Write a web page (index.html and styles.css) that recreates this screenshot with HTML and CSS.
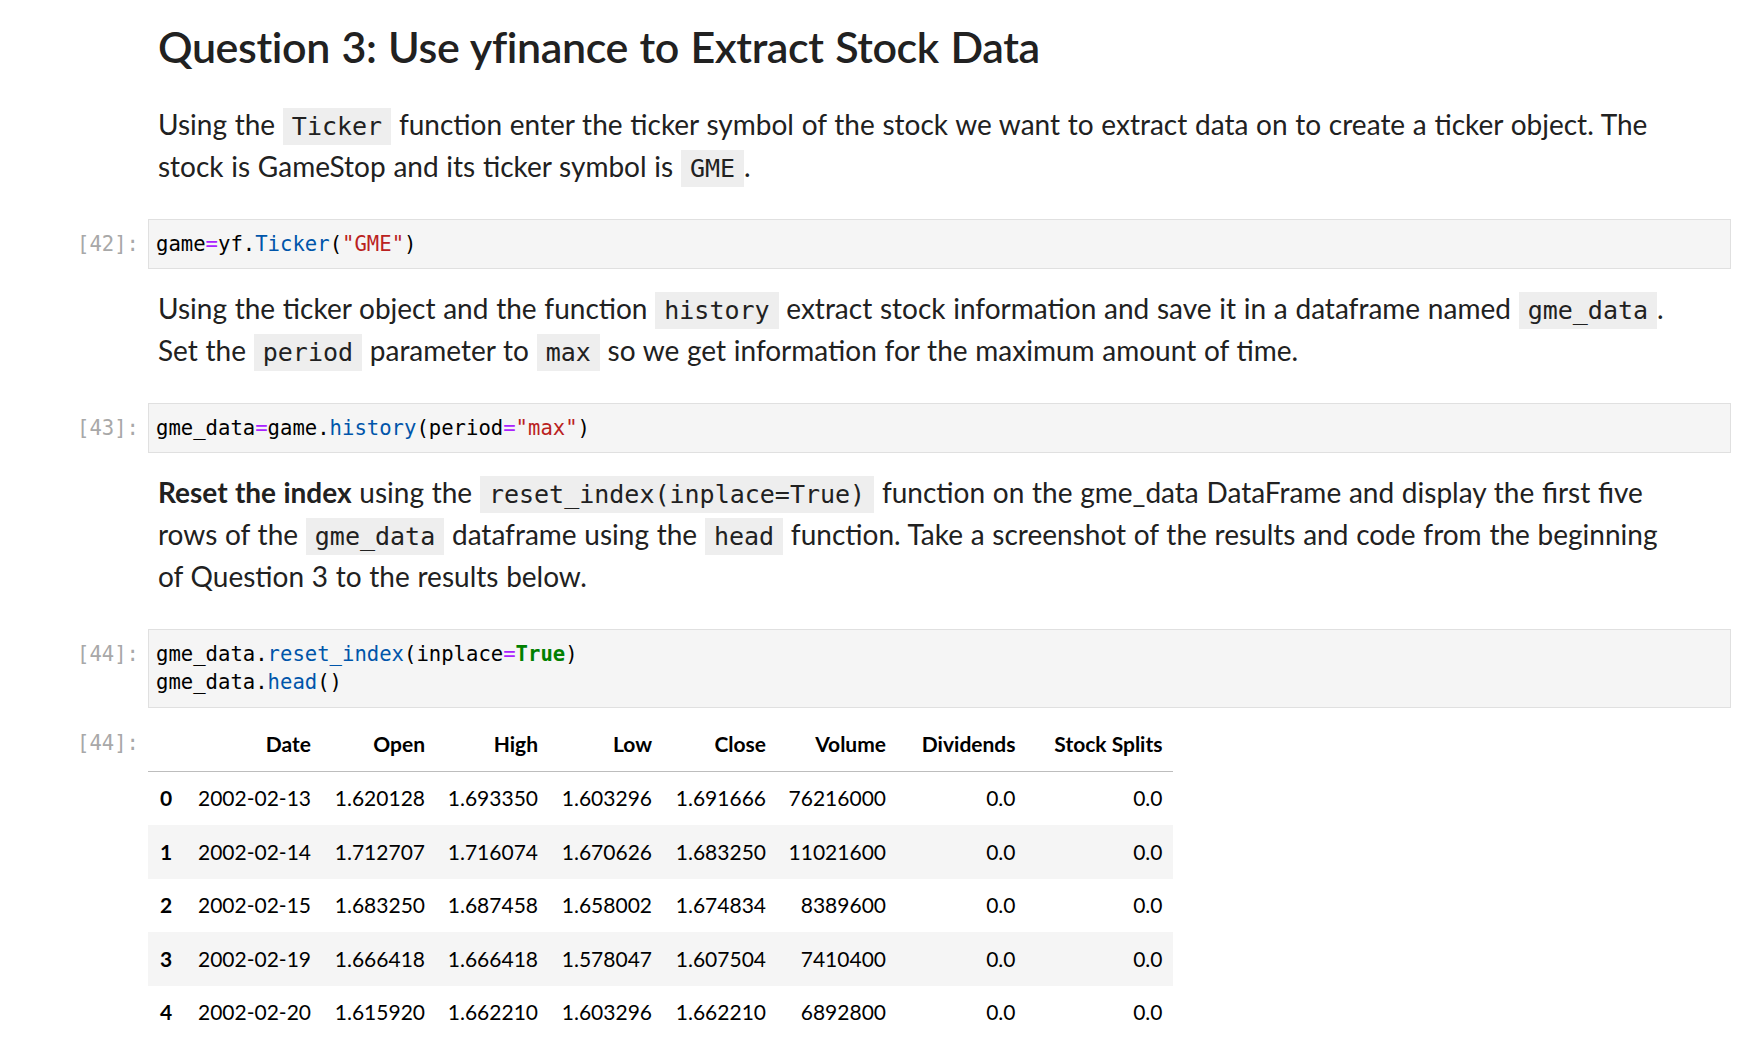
FILE: index.html
```html
<!DOCTYPE html>
<html lang="en">
<head>
<meta charset="utf-8">
<title>Question 3</title>
<link rel="stylesheet" href="styles.css">
</head>
<body>
<div class="notebook">

  <div class="cell md first">
    <div class="prompt"></div>
    <div class="md-body">
      <h2>Question 3: Use yfinance to Extract Stock Data</h2>
      <p>Using the <code>Ticker</code> function enter the ticker symbol of the stock we want to extract data on to create a ticker object. The stock is GameStop and its ticker symbol is <code>GME</code>.</p>
    </div>
  </div>

  <div class="cell code">
    <div class="prompt">[42]:</div>
    <div class="editor"><pre><span class="v">game</span><span class="op">=</span>yf.<span class="fn">Ticker</span>(<span class="str">"GME"</span>)</pre></div>
  </div>

  <div class="cell md">
    <div class="prompt"></div>
    <div class="md-body">
      <p>Using the ticker object and the function <code>history</code> extract stock information and save it in a dataframe named <code>gme_data</code>. Set the <code>period</code> parameter to <code>max</code> so we get information for the maximum amount of time.</p>
    </div>
  </div>

  <div class="cell code">
    <div class="prompt">[43]:</div>
    <div class="editor"><pre>gme_data<span class="op">=</span>game.<span class="fn">history</span>(period<span class="op">=</span><span class="str">"max"</span>)</pre></div>
  </div>

  <div class="cell md">
    <div class="prompt"></div>
    <div class="md-body">
      <p><strong>Reset the index</strong> using the <code>reset_index(inplace=True)</code> function on the gme_data DataFrame and display the first five rows of the <code>gme_data</code> dataframe using the <code>head</code> function. Take a screenshot of the results and code from the beginning of Question 3 to the results below.</p>
    </div>
  </div>

  <div class="cell code">
    <div class="prompt">[44]:</div>
    <div class="editor"><pre>gme_data.<span class="fn">reset_index</span>(inplace<span class="op">=</span><span class="kw">True</span>)
gme_data.<span class="fn">head</span>()</pre></div>
  </div>

  <div class="cell output">
    <div class="prompt">[44]:</div>
    <div class="out-body">
      <table class="df">
        <colgroup>
          <col class="c-idx">
          <col class="c-date">
          <col class="c-open">
          <col class="c-high">
          <col class="c-low">
          <col class="c-close">
          <col class="c-vol">
          <col class="c-div">
          <col class="c-split">
        </colgroup>
        <thead>
          <tr><th></th><th>Date</th><th>Open</th><th>High</th><th>Low</th><th>Close</th><th>Volume</th><th>Dividends</th><th>Stock Splits</th></tr>
        </thead>
        <tbody>
          <tr><th>0</th><td>2002-02-13</td><td>1.620128</td><td>1.693350</td><td>1.603296</td><td>1.691666</td><td>76216000</td><td>0.0</td><td>0.0</td></tr>
          <tr><th>1</th><td>2002-02-14</td><td>1.712707</td><td>1.716074</td><td>1.670626</td><td>1.683250</td><td>11021600</td><td>0.0</td><td>0.0</td></tr>
          <tr><th>2</th><td>2002-02-15</td><td>1.683250</td><td>1.687458</td><td>1.658002</td><td>1.674834</td><td>8389600</td><td>0.0</td><td>0.0</td></tr>
          <tr><th>3</th><td>2002-02-19</td><td>1.666418</td><td>1.666418</td><td>1.578047</td><td>1.607504</td><td>7410400</td><td>0.0</td><td>0.0</td></tr>
          <tr><th>4</th><td>2002-02-20</td><td>1.615920</td><td>1.662210</td><td>1.603296</td><td>1.662210</td><td>6892800</td><td>0.0</td><td>0.0</td></tr>
        </tbody>
      </table>
    </div>
  </div>

</div>
</body>
</html>
```

FILE: styles.css
```css
html, body {
  margin: 0;
  padding: 0;
  background: #ffffff;
}

body {
  font-family: Lato, "Open Sans", sans-serif;
  color: #212121;
}

.notebook {
  padding: 3px 22px 0 0;
}

.cell {
  display: flex;
  align-items: flex-start;
}

.prompt {
  flex: none;
  width: 148px;
  box-sizing: border-box;
  padding-right: 9px;
  text-align: right;
  font-family: "DejaVu Sans Mono", "Liberation Mono", monospace;
  font-size: 20.6px;
  line-height: 28.5px;
  color: #a8a8a8;
}

.cell.code .prompt {
  padding-top: 10.75px;
}

.cell.output .prompt {
  padding-top: 11px;
}

/* markdown */
.cell.md {
  padding: 18px 0 32px;
}

.md-body {
  flex: 1;
  padding: 0 60px 0 10px;
  font-size: 28px;
  line-height: 42px;
  word-spacing: 0.02em;
}

.md-body h2 {
  margin: 0 0 30px;
  font-size: 43px;
  line-height: 52px;
  font-weight: 600;
  letter-spacing: -0.4px;
  word-spacing: 0.03em;
  color: #212121;
}

.md-body p {
  margin: 0;
}

.md-body strong {
  font-weight: 700;
}

.md-body code {
  font-family: "DejaVu Sans Mono", "Liberation Mono", monospace;
  font-size: 25px;
  line-height: 1;
  word-spacing: 0;
  background: #eeeeee;
  padding: 4px 9px;
  color: #212121;
}

/* code editor */
.editor {
  flex: 1;
  background: #f5f5f5;
  border: 1px solid #e0e0e0;
  padding: 9.75px 7px;
}

.editor pre {
  margin: 0;
  font-family: "DejaVu Sans Mono", "Liberation Mono", monospace;
  font-size: 20.6px;
  line-height: 28.5px;
  color: #000000;
}

.op { color: #aa22ff; }
.fn { color: #0055aa; }
.str { color: #ba2121; }
.kw { color: #008000; font-weight: 700; }

/* output */
.cell.output {
  padding-top: 10px;
}

.out-body {
  flex: 1;
}

.df {
  border-collapse: collapse;
  table-layout: fixed;
  width: 1025px;
  font-size: 21px;
  line-height: 32.5px;
  color: #000000;
}

.c-idx { width: 37.5px; }
.c-date { width: 136px; }
.c-open { width: 114px; }
.c-high { width: 113px; }
.c-low { width: 114px; }
.c-close { width: 114px; }
.c-vol { width: 120px; }
.c-div { width: 129.5px; }
.c-split { width: 147px; }

.df th,
.df td {
  padding: 10.5px;
  text-align: right;
  white-space: nowrap;
  font-weight: 400;
}

.df thead th {
  font-weight: 700;
  vertical-align: bottom;
  border-bottom: 1px solid #bdbdbd;
  padding-bottom: 10px;
}

.df tbody th {
  font-weight: 700;
  text-align: left;
  padding-left: 12px;
  padding-right: 0;
}

.df tbody tr:nth-child(even) {
  background: #f5f5f5;
}
```
